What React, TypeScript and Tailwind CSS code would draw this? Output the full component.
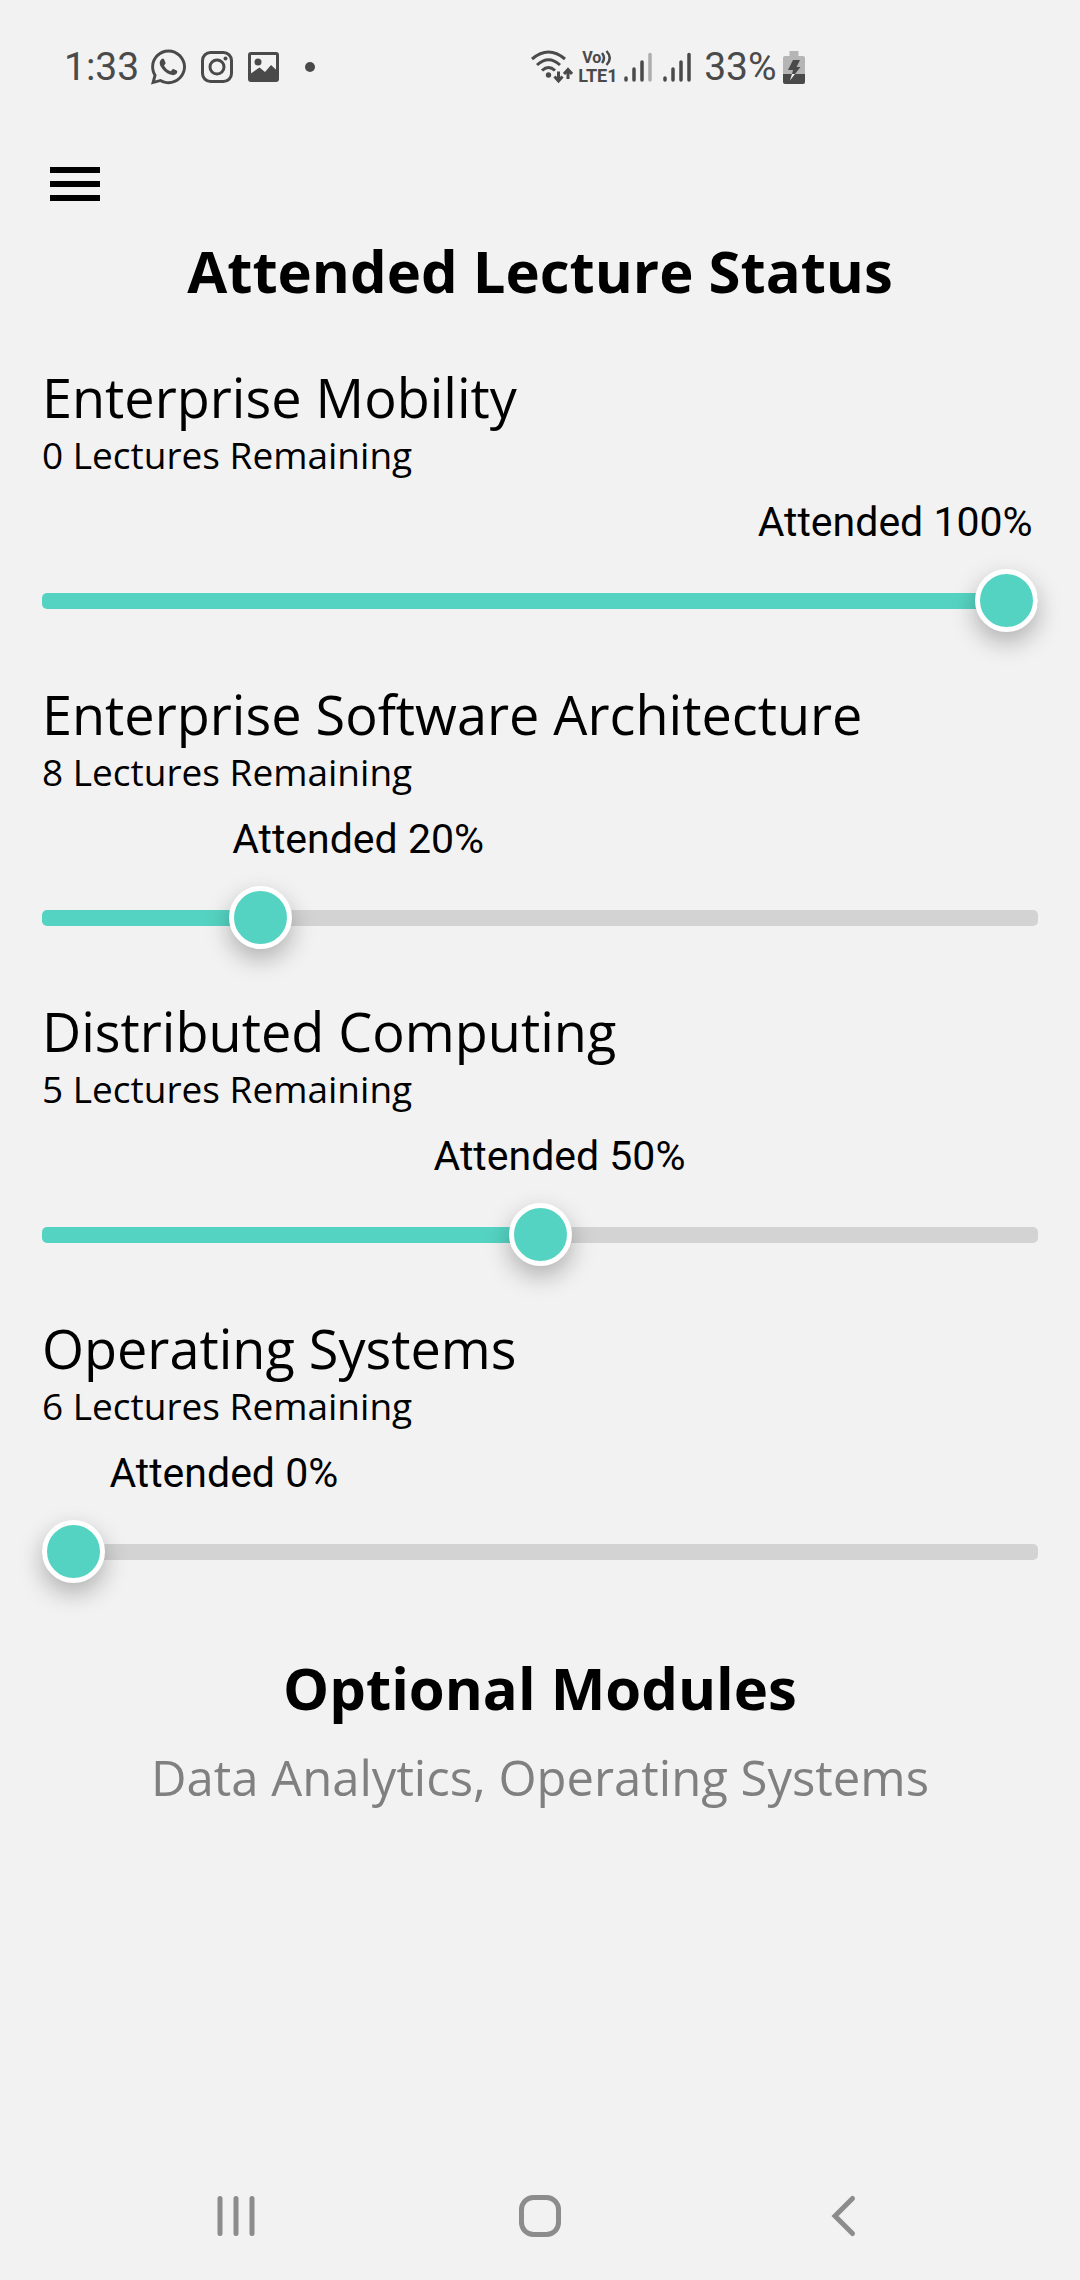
import { useState } from 'react';
import type { CSSProperties } from 'react';
import { FaWhatsapp } from 'react-icons/fa';

type Course = { name: string; remaining: number; attended: number };

const courses: Course[] = [
  { name: 'Enterprise Mobility', remaining: 0, attended: 100 },
  { name: 'Enterprise Software Architecture', remaining: 8, attended: 20 },
  { name: 'Distributed Computing', remaining: 5, attended: 50 },
  { name: 'Operating Systems', remaining: 6, attended: 0 },
];

function InstagramIcon() {
  return (
    <svg className="h-8 w-8" viewBox="0 0 32 32" fill="none" stroke="currentColor" aria-hidden="true">
      <rect x="1.5" y="1.5" width="29" height="29" rx="8" strokeWidth="3" />
      <circle cx="16" cy="16" r="7" strokeWidth="3" />
      <circle cx="24.5" cy="7.5" r="2" fill="currentColor" stroke="none" />
    </svg>
  );
}

function PictureIcon() {
  return (
    <svg className="h-8 w-8" viewBox="0 0 32 32" aria-hidden="true">
      <rect x="1.5" y="2.5" width="28" height="27" rx="1.5" fill="none" stroke="currentColor" strokeWidth="3" />
      <circle cx="10" cy="11" r="3.5" fill="currentColor" />
      <path d="M2 23 L11.5 16.5 L17 21 L23 14 L30 20.5 V30 H2 Z" fill="currentColor" />
    </svg>
  );
}

function WifiIcon() {
  return (
    <svg className="h-9 w-[42px]" viewBox="0 0 42 36" fill="none" stroke="currentColor" strokeWidth="3" aria-hidden="true">
      <path d="M1 10 Q17.500 -4 34 10" />
      <path d="M6 16 Q17.500 5.500 29 16" />
      <path d="M11 21.500 Q17.500 15.500 24 21.500" />
      <circle cx="17.5" cy="26" r="2.700" fill="currentColor" stroke="none" />
      <path d="M27.500 22.500 V31 M23.500 27.500 L27.500 32 L31.500 27.500" />
      <path d="M37 30 V21.500 M33 25 L37 20.500 L41 25" />
    </svg>
  );
}

function VolteIcon() {
  return (
    <span className="flex w-10 flex-col items-start font-bold">
      <span className="flex items-center pl-1 text-[16px] leading-[18px]">
        Vo
        <svg className="h-4 w-3" viewBox="0 0 12 16" fill="none" stroke="currentColor" strokeWidth="2.500" aria-hidden="true">
          <path d="M1 3 Q5 8 1 13 M5.500 1 Q12 8 5.500 15" />
        </svg>
      </span>
      <span className="text-[18px] leading-[18px]">LTE1</span>
    </span>
  );
}

function SignalIcon({ full }: { full: boolean }) {
  return (
    <svg className="h-8 w-7" viewBox="0 0 28 32" stroke="currentColor" strokeWidth="3.500" strokeLinecap="round" aria-hidden="true">
      <path d="M2 27 V29 M10 18 V29 M18 11 V29" />
      <path d="M26 3.500 V29" opacity={full ? 1 : 0.4} />
    </svg>
  );
}

function BatteryIcon() {
  return (
    <svg className="h-[33px] w-[22px]" viewBox="0 0 22 33" aria-hidden="true">
      <path d="M6.500 0 H15.500 V5 H20 Q22 5 22 7 V23 H0 V7 Q0 5 2 5 H6.500 Z" fill="#b5b5b5" />
      <path d="M0 23 H22 V31 Q22 33 20 33 H2 Q0 33 0 31 Z" fill="currentColor" />
      <path d="M10 9 H17 L13.500 16 H17.500 L12 23 H9 L10 19 H5 Z" fill="currentColor" />
      <path d="M9 23 H12 L7 29.500 Z" fill="#f2f2f2" />
    </svg>
  );
}

function StatusBar() {
  return (
    <header className="flex h-[134px] items-center font-[Roboto,sans-serif] text-[39px] leading-none text-[#4a4a4a]">
      <div className="flex w-[49%] items-center pl-16">
        <span>1:33</span>
        <div className="flex items-center gap-[15px] pl-3">
          <FaWhatsapp className="h-10 w-[35px]" aria-hidden="true" />
          <InstagramIcon />
          <PictureIcon />
          <span className="ml-[10px] h-[10px] w-[10px] rounded-full bg-[#4a4a4a]" />
        </div>
      </div>
      <div className="flex items-center pl-[2px]">
        <WifiIcon />
        <div className="pl-[5px]">
          <VolteIcon />
        </div>
        <div className="flex gap-[11px] pl-[6px]">
          <SignalIcon full={false} />
          <SignalIcon full />
        </div>
        <span className="pl-[13px]">33%</span>
        <div className="pl-[6px]">
          <BatteryIcon />
        </div>
      </div>
    </header>
  );
}

function CourseSlider({ course, index }: { course: Course; index: number }) {
  const [value, setValue] = useState(course.attended);
  const id = 'course-' + index;
  return (
    <section>
      <h2 className="text-[54px] leading-[66px]">
        <label htmlFor={id}>{course.name}</label>
      </h2>
      <p className="text-[37px] leading-[50px]">{course.remaining} Lectures Remaining</p>
      <output
        htmlFor={id}
        className="mt-[18px] block w-[280px] text-center font-[Roboto,sans-serif] text-[41px] leading-[48px] whitespace-nowrap"
        style={{ marginLeft: `${4.2 + value * 0.674}%` }}
      >
        Attended {value}%
      </output>
      <input
        id={id}
        type="range"
        min={0}
        max={100}
        value={value}
        onChange={(e) => setValue(Number(e.target.value))}
        style={{ '--fill': `${value}%` } as CSSProperties}
        className="mt-[23px] block h-[63px] w-full cursor-pointer appearance-none bg-transparent [&::-webkit-slider-runnable-track]:h-4 [&::-webkit-slider-runnable-track]:rounded-[5px] [&::-webkit-slider-runnable-track]:bg-[linear-gradient(to_right,#55d3c2_var(--fill),#d3d3d3_var(--fill))] [&::-webkit-slider-thumb]:-mt-6 [&::-webkit-slider-thumb]:h-[63px] [&::-webkit-slider-thumb]:w-[63px] [&::-webkit-slider-thumb]:appearance-none [&::-webkit-slider-thumb]:rounded-full [&::-webkit-slider-thumb]:border-[5px] [&::-webkit-slider-thumb]:border-solid [&::-webkit-slider-thumb]:border-white [&::-webkit-slider-thumb]:bg-[#55d3c2] [&::-webkit-slider-thumb]:shadow-[0_10px_24px_rgba(0,0,0,0.28)]"
      />
    </section>
  );
}

function NavigationBar() {
  return (
    <nav className="grid h-32 grid-cols-3 place-items-center px-[84px] text-[#8c8c8c]">
      <button type="button" aria-label="Recent apps">
        <svg className="h-11 w-11" viewBox="0 0 44 44" stroke="currentColor" strokeWidth="5" strokeLinecap="round">
          <path d="M6 4.500 V39.500 M22 4.500 V39.500 M38 4.500 V39.500" />
        </svg>
      </button>
      <button type="button" aria-label="Home">
        <svg className="h-11 w-11" viewBox="0 0 44 44" fill="none" stroke="currentColor" strokeWidth="5">
          <rect x="3.500" y="3.500" width="37" height="37" rx="12" />
        </svg>
      </button>
      <button type="button" aria-label="Back">
        <svg className="h-11 w-11" viewBox="0 0 44 44" fill="none" stroke="currentColor" strokeWidth="5" strokeLinecap="round">
          <path d="M30.500 4.500 L13 22 L30.500 39.500" />
        </svg>
      </button>
    </nav>
  );
}

export default function App() {
  return (
    <div className="flex min-h-screen flex-col bg-[#f2f2f2] font-['Open_Sans',sans-serif] text-black">
      <StatusBar />
      <div className="flex h-[100px] items-center pl-[50px]">
        <button type="button" aria-label="Open menu" className="flex w-[50px] flex-col gap-2">
          <span className="h-[6px] w-full bg-black" />
          <span className="h-[6px] w-full bg-black" />
          <span className="h-[6px] w-full bg-black" />
        </button>
      </div>
      <main className="flex-1 px-[42px]">
        <h1 className="text-center text-[58px] leading-[74px] font-bold">Attended Lecture Status</h1>
        <div className="mt-14 flex flex-col gap-[49px]">
          {courses.map((course, index) => (
            <CourseSlider key={course.name} course={course} index={index} />
          ))}
        </div>
        <h2 className="mt-[68px] text-center text-[58px] leading-[74px] font-bold">Optional Modules</h2>
        <p className="mt-5 text-center text-[49px] leading-[64px] text-[#808080]">
          Data Analytics, Operating Systems
        </p>
      </main>
      <NavigationBar />
    </div>
  );
}
